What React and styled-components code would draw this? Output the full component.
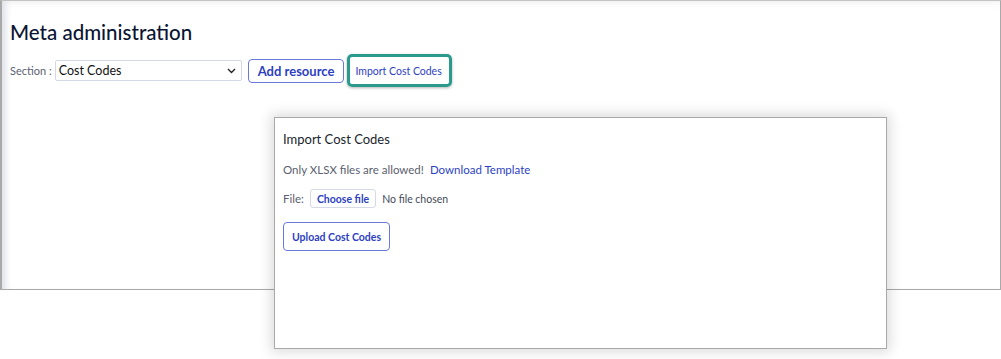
import styled, { createGlobalStyle } from 'styled-components';

const GlobalStyle = createGlobalStyle`
  html, body {
    margin: 0;
    padding: 0;
    background: #ffffff;
  }
  body {
    font-family: Lato, "Open Sans", sans-serif;
    color: #0b1533;
  }
`;

const Stage = styled.div`
  position: relative;
  width: 1001px;
  height: 359px;
  overflow: hidden;
  background: #ffffff;
`;

const Window = styled.div`
  box-sizing: border-box;
  width: 1001px;
  height: 290px;
  border: 1px solid #a9a9a9;
  border-left-width: 2px;
  border-top-color: #c4c4c4;
  box-shadow: inset 8px 0 6px -4px #dfe2e8, inset 0 8px 10px -8px #ececec;
  padding: 19px 0 0 8px;
`;

const Title = styled.h1`
  margin: 0;
  font-size: 20.5px;
  font-weight: 500;
  color: #0b1533;
`;

const Toolbar = styled.div`
  display: flex;
  align-items: center;
  margin-top: 10px;
`;

const Label = styled.span`
  font-size: 11px;
  color: #5b6170;
  margin-right: 3px;
`;

const SelectBox = styled.div`
  box-sizing: border-box;
  display: flex;
  align-items: center;
  justify-content: space-between;
  width: 187px;
  height: 21px;
  padding: 0 5px 0 3px;
  border: 1px solid #d4d8e4;
  border-radius: 2px;
  font-size: 12.5px;
  color: #111;
  margin-right: 6px;
`;

const Button = styled.button`
  box-sizing: border-box;
  font-family: Lato, "Open Sans", sans-serif;
  background: #ffffff;
  color: #2d3fc2;
  border: 1px solid ${(p) => p.$border || '#6c78d8'};
  border-radius: ${(p) => p.$radius || 4}px;
  font-size: ${(p) => p.$size || 13}px;
  font-weight: ${(p) => p.$weight || 700};
  height: ${(p) => p.$height || 24}px;
  padding: 0 ${(p) => p.$pad || 10}px;
  cursor: pointer;
`;

const Highlight = styled.div`
  box-sizing: border-box;
  height: 33px;
  margin-left: 3px;
  border: 3px solid #2a9a8c;
  border-radius: 5px;
  box-shadow: 0 1px 3px rgba(0, 0, 0, 0.3);
  display: flex;
  align-items: center;
  padding: 0 7px 0 5px;
  font-size: 10.5px;
  color: #2d3fc2;
`;

const Dialog = styled.div`
  position: absolute;
  left: 274px;
  top: 117px;
  box-sizing: border-box;
  width: 613px;
  height: 232px;
  background: #ffffff;
  border: 1px solid #a9a9a9;
  box-shadow: 0 0 12px 3px rgba(0, 0, 0, 0.14);
  padding: 13px 0 0 8px;
  display: flex;
  flex-direction: column;
  align-items: flex-start;
`;

const DialogTitle = styled.div`
  font-size: 13px;
  color: #1a1f2e;
`;

const Row = styled.div`
  display: flex;
  align-items: center;
  gap: ${(p) => p.$gap || 8}px;
  margin-top: ${(p) => p.$top}px;
  font-size: 11.5px;
  color: #5b6170;
`;

const Link = styled.span`
  color: #2d3fc2;
`;

const Plain = styled.span`
  color: #444a58;
  font-size: 10.5px;
`;

const Chevron = () => (
  <svg width="9" height="6" viewBox="0 0 9 6">
    <path d="M1 1l3.5 3.5L8 1" fill="none" stroke="#222" strokeWidth="1.4" />
  </svg>
);

export default function App() {
  return (
    <>
      <GlobalStyle />
      <Stage>
        <Window>
          <Title>Meta administration</Title>
          <Toolbar>
            <Label>Section :</Label>
            <SelectBox>
              Cost Codes
              <Chevron />
            </SelectBox>
            <Button $pad={9}>Add resource</Button>
            <Highlight>Import Cost Codes</Highlight>
          </Toolbar>
        </Window>
        <Dialog>
          <DialogTitle>Import Cost Codes</DialogTitle>
          <Row $top={16} $gap={6}>
            Only XLSX files are allowed! <Link>Download Template</Link>
          </Row>
          <Row $top={13} $gap={6}>
            File:
            <Button $border="#d6dae4" $radius={3} $size={10.5} $height={19} $pad={6}>
              Choose file
            </Button>
            <Plain>No file chosen</Plain>
          </Row>
          <Row $top={14}>
            <Button $size={10.5} $height={29} $pad={8}>
              Upload Cost Codes
            </Button>
          </Row>
        </Dialog>
      </Stage>
    </>
  );
}
